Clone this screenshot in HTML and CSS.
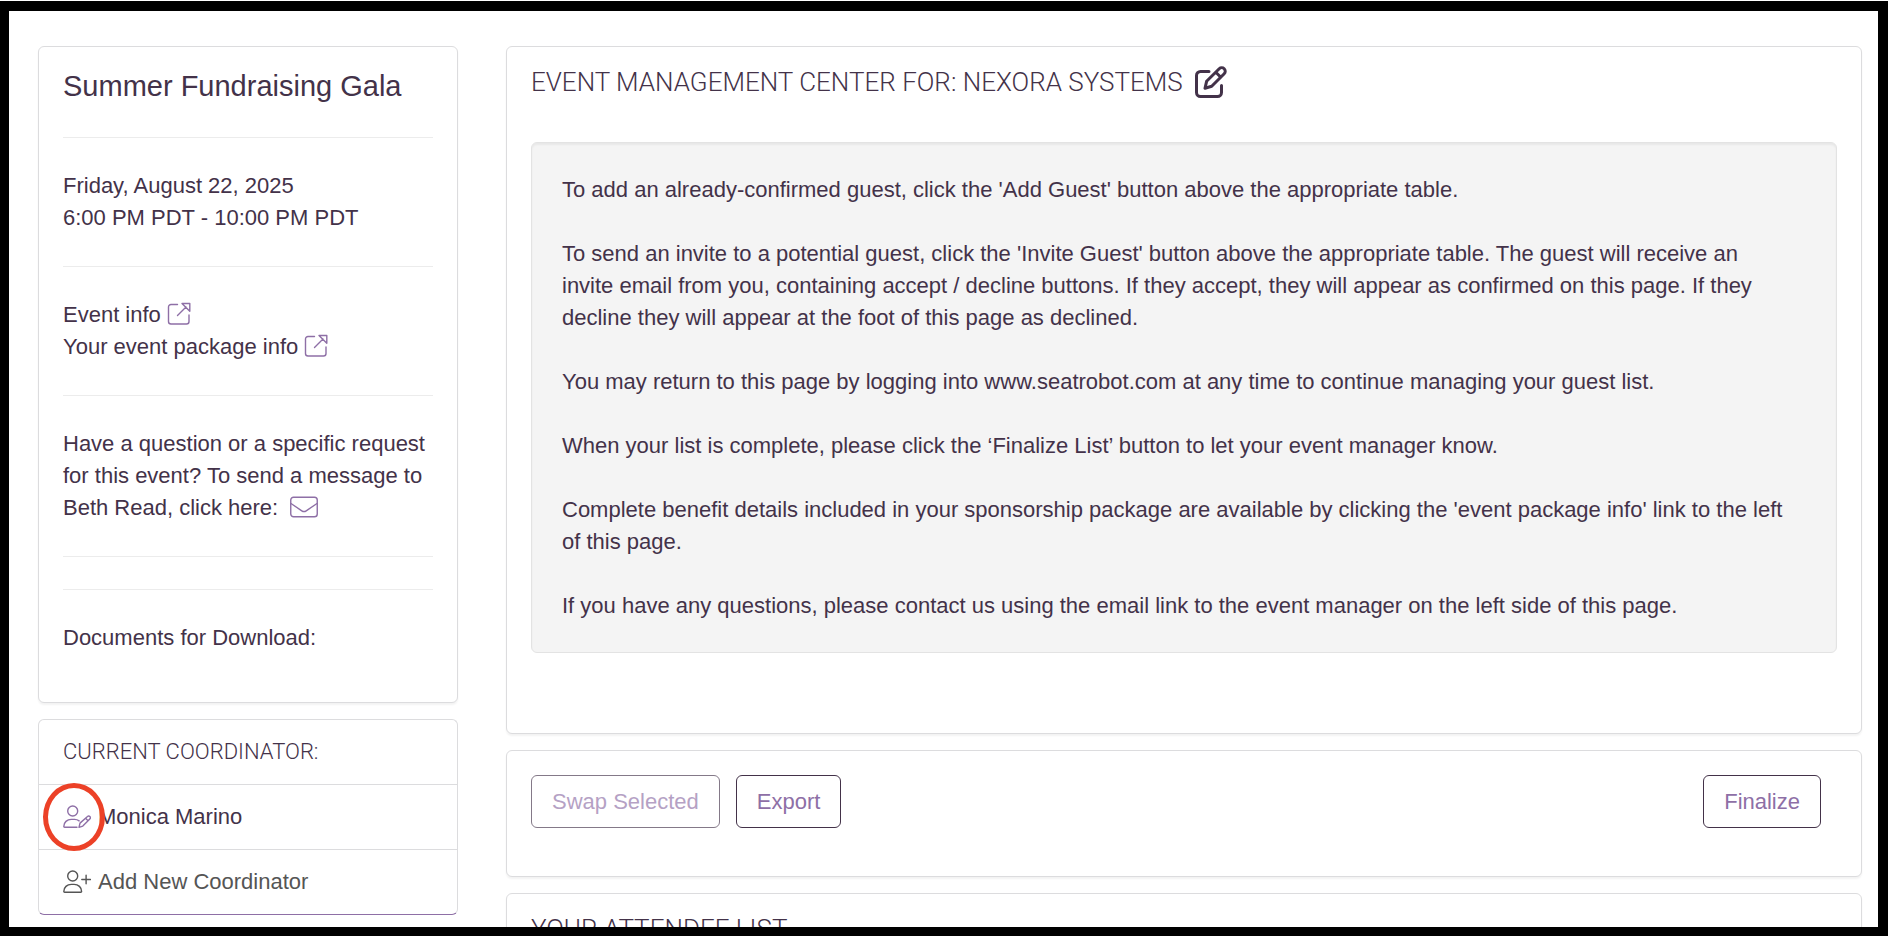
FILE: index.html
```html
<!DOCTYPE html>
<html lang="en">
<head>
<meta charset="utf-8">
<title>Event Management Center</title>
<link rel="stylesheet" href="styles.css">
</head>
<body>
<div class="frame">
  <aside class="sidebar">
    <section class="card event">
      <h1 class="event-title">Summer Fundraising Gala</h1>
      <hr class="rule">
      <p class="text">Friday, August 22, 2025<br>6:00 PM PDT - 10:00 PM PDT</p>
      <hr class="rule">
      <p class="text">
        Event info <a class="link" href="#" aria-label="Open event info"><svg class="icon-ext" viewBox="0 0 24 24"><path d="M10.500 2.500H4a2.500 2.500 0 0 0-2.500 2.500v14.500A2.500 2.500 0 0 0 4 22h15.500a2.500 2.500 0 0 0 2.500-2.500V13M10.500 13.500l8.500-8.500M15 1.500h7.800v7.800z"/></svg></a><br>
        Your event package info <a class="link" href="#" aria-label="Open package info"><svg class="icon-ext" viewBox="0 0 24 24"><path d="M10.500 2.500H4a2.500 2.500 0 0 0-2.500 2.500v14.500A2.500 2.500 0 0 0 4 22h15.500a2.500 2.500 0 0 0 2.500-2.500V13M10.500 13.500l8.500-8.500M15 1.500h7.800v7.800z"/></svg></a>
      </p>
      <hr class="rule">
      <p class="text">Have a question or a specific request for this event? To send a message to Beth Read, click here: <a class="link mail" href="#" aria-label="Send a message"><svg class="icon-mail" viewBox="0 0 28 22"><rect x="0.750" y="1.250" width="26.500" height="19.500" rx="2.800"/><path d="M1 7.500l10.800 7.300a4 4 0 0 0 4.400 0L27 7.500"/></svg></a></p>
      <hr class="rule">
      <hr class="rule">
      <p class="text">Documents for Download:</p>
    </section>

    <section class="card coordinator">
      <h2 class="row row-head">Current Coordinator:</h2>
      <div class="row">
        <a class="link user" href="#" aria-label="Edit coordinator"><svg class="icon-user" viewBox="0 0 28 24"><circle cx="9.700" cy="6" r="5"/><path d="M14 22.300H1.600a.8.800 0 0 1-.8-.8c0-4.200 3.300-7.100 7.500-7.100h3.300c1.800 0 3.200.5 4.500 1.500M16 22.300l1-4.200 7.500-6.600a1.600 1.600 0 0 1 2.300 2.400l-7 7.200zM22.600 13.200l2.400 2.500"/></svg><span class="marker"></span></a>
        <span>Monica Marino</span>
      </div>
      <a class="row row-add" href="#"><svg class="icon-user" viewBox="0 0 28 24"><circle cx="9.700" cy="6" r="5"/><path d="M1.600 22.300a.8.800 0 0 1-.8-.8c0-4.200 3.300-7.100 7.500-7.100h2.800c4.200 0 7.500 2.900 7.500 7.100a.8.800 0 0 1-.8.800zM18.800 9.500h8.600M23.100 5.200v8.600"/></svg><span>Add New Coordinator</span></a>
    </section>
  </aside>

  <main class="content">
    <section class="card panel">
      <h2 class="panel-title">Event Management Center for: Nexora Systems
        <a class="edit" href="#" aria-label="Edit name"><svg class="icon-edit" viewBox="0 0 32 32"><path d="M14 5.500H5.500a4 4 0 0 0-4 4V26.500a4 4 0 0 0 4 4H22.500a4 4 0 0 0 4-4V19.500M10 22.300l1.600-7L24.200 2.700a3.500 3.500 0 0 1 5 5L16.700 20.300zM20.800 6.200l5 5"/></svg></a>
      </h2>
      <div class="well">
        <p class="text">To add an already-confirmed guest, click the 'Add Guest' button above the appropriate table.</p>
        <p class="text">To send an invite to a potential guest, click the 'Invite Guest' button above the appropriate table. The guest will receive an invite email from you, containing accept / decline buttons. If they accept, they will appear as confirmed on this page. If they decline they will appear at the foot of this page as declined.</p>
        <p class="text">You may return to this page by logging into www.seatrobot.com at any time to continue managing your guest list.</p>
        <p class="text">When your list is complete, please click the ‘Finalize List’ button to let your event manager know.</p>
        <p class="text">Complete benefit details included in your sponsorship package are available by clicking the 'event package info' link to the left of this page.</p>
        <p class="text">If you have any questions, please contact us using the email link to the event manager on the left side of this page.</p>
      </div>
    </section>

    <section class="card actions">
      <button class="btn" type="button" disabled>Swap Selected</button>
      <button class="btn" type="button">Export</button>
      <button class="btn btn-end" type="button">Finalize</button>
    </section>

    <section class="card panel">
      <h2 class="panel-title">Your Attendee List</h2>
    </section>
  </main>
</div>
</body>
</html>
```
FILE: styles.css
```css
* {
  box-sizing: border-box;
}

body {
  margin: 0;
  padding-top: 1px;
  height: 100vh;
  overflow: hidden;
  background: #fff;
  color: #433249;
  font: 22px/32px "Liberation Sans", Arial, sans-serif;
}

.frame {
  display: grid;
  grid-template-columns: 420px minmax(0, 1fr);
  align-items: start;
  gap: 48px;
  height: 100%;
  padding: 35px 16px 0 29px;
  overflow: hidden;
  border: solid #000;
  border-width: 10px 10px 9px 9px;
}

.sidebar,
.content {
  display: flex;
  flex-direction: column;
  gap: 16px;
}

.card {
  border: 1px solid #dcdcde;
  border-radius: 6px;
  background: #fff;
  box-shadow: 0 2px 2px rgba(0, 0, 0, 0.05);
}

.event {
  padding: 24px 24px 48px;
}

.event-title {
  margin: 0 0 36px;
  font-size: 29px;
  font-weight: 400;
  line-height: 30px;
}

.rule {
  height: 1px;
  margin: 32px 0;
  border: 0;
  background: #ececec;
}

.text {
  margin: 0;
}

.link {
  color: #8e6fa6;
}

svg {
  fill: none;
  stroke: currentColor;
  stroke-width: 1.4;
  stroke-linejoin: round;
  stroke-linecap: round;
}

.icon-ext {
  width: 24px;
  height: 24px;
  vertical-align: -4px;
}

.mail {
  margin-left: 6px;
}

.icon-mail {
  width: 28px;
  height: 22px;
  vertical-align: -3px;
}

.coordinator {
  border-bottom-color: #8e6fa6;
  box-shadow: none;
}

.row {
  display: flex;
  align-items: center;
  gap: 7px;
  height: 64px;
  margin: 0;
  padding: 0 24px;
}

.row + .row {
  height: 65px;
  border-top: 1px solid #dcdcde;
}

.row-head {
  font: 300 22px/32px Roboto, sans-serif;
  text-transform: uppercase;
}

.row-add {
  color: #555;
  text-decoration: none;
}

.user {
  position: relative;
  display: flex;
}

.icon-user {
  width: 28px;
  height: 24px;
}

.marker {
  position: absolute;
  top: -22px;
  left: -20px;
  width: 62px;
  height: 68px;
  border: 5px solid #ec4127;
  border-radius: 50%;
}

.panel {
  padding: 15px 24px 80px;
}

.panel-title {
  display: flex;
  align-items: center;
  gap: 12px;
  height: 40px;
  margin: 0 0 40px;
  font: 300 26px/32px Roboto, sans-serif;
  text-transform: uppercase;
}

.edit {
  display: flex;
  color: #433249;
}

.icon-edit {
  width: 32px;
  height: 32px;
  stroke-width: 3;
}

.well {
  display: grid;
  gap: 32px;
  padding: 31px 48px 30px 30px;
  border: 1px solid #e3e3e3;
  border-radius: 6px;
  background: #f4f4f4;
  box-shadow: inset 0 2px 2px rgba(0, 0, 0, 0.05);
}

.actions {
  display: flex;
  gap: 16px;
  padding: 24px 40px 48px 24px;
}

.btn {
  height: 53px;
  padding: 0 20px;
  border: 1px solid #433249;
  border-radius: 6px;
  background: #fff;
  color: #8e6fa6;
  font: inherit;
}

.btn:disabled {
  opacity: 0.65;
}

.btn-end {
  margin-left: auto;
}
```
